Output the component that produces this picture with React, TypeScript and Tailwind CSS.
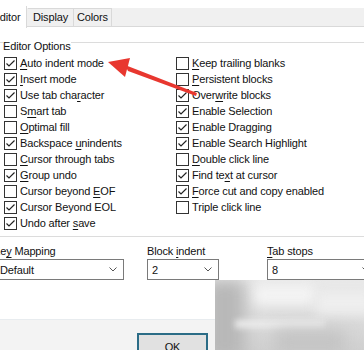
import React from "react";

const font = { fontFamily: '"Liberation Sans", Arial, sans-serif' };

function Check({ on }: { on: boolean }) {
  return (
    <div className="w-[13px] h-[13px] shrink-0 border border-[#333333] bg-white flex items-center justify-center">
      {on && (
        <svg width="11" height="11" viewBox="0 0 11 11">
          <path d="M1.5 5.5 L4 8 L9.5 2.5" fill="none" stroke="#222" strokeWidth="1.2" />
        </svg>
      )}
    </div>
  );
}

type Item = { on: boolean; pre: string; u?: string; post?: string };

function Row({ it }: { it: Item }) {
  return (
    <div className="h-4 flex items-center gap-[3px] whitespace-nowrap">
      <Check on={it.on} />
      <span className="leading-4">
        {it.pre}
        {it.u && <span className="underline underline-offset-[2px] decoration-1">{it.u}</span>}
        {it.post}
      </span>
    </div>
  );
}

const left: Item[] = [
  { on: true, pre: "", u: "A", post: "uto indent mode" },
  { on: true, pre: "", u: "I", post: "nsert mode" },
  { on: true, pre: "Use tab cha", u: "r", post: "acter" },
  { on: false, pre: "S", u: "m", post: "art tab" },
  { on: false, pre: "", u: "O", post: "ptimal fill" },
  { on: true, pre: "Backspace ", u: "u", post: "nindents" },
  { on: false, pre: "", u: "C", post: "ursor through tabs" },
  { on: true, pre: "", u: "G", post: "roup undo" },
  { on: false, pre: "Cursor beyond ", u: "E", post: "OF" },
  { on: true, pre: "Cursor Beyond EOL" },
  { on: true, pre: "Undo after ", u: "s", post: "ave" },
];

const right: Item[] = [
  { on: false, pre: "", u: "K", post: "eep trailing blanks" },
  { on: false, pre: "", u: "P", post: "ersistent blocks" },
  { on: true, pre: "Over", u: "w", post: "rite blocks" },
  { on: true, pre: "Enable Selection" },
  { on: true, pre: "Enable Dragging" },
  { on: true, pre: "Enable Search Highlight" },
  { on: false, pre: "", u: "D", post: "ouble click line" },
  { on: true, pre: "Find te", u: "x", post: "t at cursor" },
  { on: true, pre: "", u: "F", post: "orce cut and copy enabled" },
  { on: false, pre: "Triple click line" },
];

function Chevron() {
  return (
    <svg width="8" height="5" viewBox="0 0 8 5" className="shrink-0">
      <path d="M0.5 0.5 L4 4 L7.5 0.5" fill="none" stroke="#555" strokeWidth="1" />
    </svg>
  );
}

function Select({ value, w }: { value: string; w: string }) {
  return (
    <div className={`${w} h-[21px] border border-[#7a7a7a] bg-white flex items-center justify-between pl-[4px] pr-[6px]`}>
      <span className="leading-4">{value}</span>
      <Chevron />
    </div>
  );
}

export default function App() {
  return (
    <div
      className="w-[364px] h-[350px] overflow-hidden relative bg-white text-[11px] tracking-[-0.15px] text-[#111]"
      style={font}
    >
      {/* tabs */}
      <div className="h-[27px] flex items-end relative">
        <div className="absolute left-0 right-0 top-[8px] h-[18px] bg-[#f0f0f0]" />
        <div className="absolute left-0 right-0 top-[26px] h-px bg-[#d9d9d9]" />
        <div className="relative ml-[-13px] w-[40px] h-[22px] bg-white border-r border-[#d9d9d9] flex items-center justify-center z-10 self-end mb-[-1px]">
          Editor
        </div>
        <div className="relative w-[46px] h-[18px] bg-[#f0f0f0] border-t border-r border-[#d9d9d9] flex items-center justify-center ml-[1px] mb-px">
          Display
        </div>
        <div className="relative w-[38px] h-[18px] bg-[#f0f0f0] border-t border-r border-[#d9d9d9] flex items-center justify-center mb-px">
          Colors
        </div>
      </div>

      {/* group box */}
      <div className="mt-[15px] ml-[-4px] w-[400px] border-t border-b border-[#dcdcdc] pb-[5px]">
        <div className="-mt-[5px] ml-[7px] w-fit leading-4 h-4 bg-white">Editor Options</div>
        <div className="mt-px flex pl-[8px]">
          <div className="w-[172px] flex flex-col">
            {left.map((it, i) => (
              <Row key={i} it={it} />
            ))}
          </div>
          <div className="flex flex-col">
            {right.map((it, i) => (
              <Row key={i} it={it} />
            ))}
          </div>
        </div>
      </div>

      {/* selects */}
      <div className="mt-[6px] flex">
        <div className="ml-[-5px] w-[129px] flex flex-col">
          <div className="h-4 leading-4 ml-[-2px]">
            Ke<span className="underline underline-offset-[2px]">y</span> Mapping
          </div>
          <Select value="Default" w="w-[129px]" />
        </div>
        <div className="ml-[23px] w-[72px] flex flex-col">
          <div className="h-4 leading-4 whitespace-nowrap">
            Block <span className="underline underline-offset-[2px]">i</span>ndent
          </div>
          <Select value="2" w="w-[72px]" />
        </div>
        <div className="ml-[48px] w-[110px] flex flex-col">
          <div className="h-4 leading-4">
            <span className="underline underline-offset-[2px]">T</span>ab stops
          </div>
          <Select value="8" w="w-[110px]" />
        </div>
      </div>

      {/* bottom bar */}
      <div className="mt-[39px] h-[31px] border-t border-[#e8ecef] bg-[#f3f3f3] pl-[137px] pt-[13px]">
        <div className="w-[71px] h-[24px] border-2 border-[#2b6c86] bg-[#e1e1e1] flex items-start pt-[4px] justify-center leading-4">
          OK
        </div>
      </div>

      {/* blurred image */}
      <div className="absolute left-[215px] top-[280px] w-[149px] h-[70px] overflow-hidden bg-gradient-to-b from-[#e9e9e9] via-[#dcdcdc] to-[#d0d0d0]">
        <div className="absolute left-[-10px] top-[0px] w-[40px] h-[80px] bg-[#b8b8b8] blur-[8px]" />
        <div className="absolute left-[40px] top-[5px] w-[60px] h-[20px] bg-[#f4f4f4] blur-[6px]" />
        <div className="absolute left-[100px] top-[10px] w-[60px] h-[25px] bg-[#eeeeee] blur-[6px]" />
        <div className="absolute left-[20px] top-[40px] w-[90px] h-[8px] bg-[#ebebeb] blur-[3px]" />
        <div className="absolute left-[60px] top-[50px] w-[70px] h-[25px] bg-[#c4c4c4] blur-[8px]" />
      </div>

      {/* red arrow */}
      <svg className="absolute left-0 top-0 pointer-events-none" width="364" height="350">
        <polygon points="108,62 130,58 125,77" fill="#e8372f" />
        <polygon points="125,65 128,71 196,96 197,93" fill="#e8372f" />
      </svg>
    </div>
  );
}
